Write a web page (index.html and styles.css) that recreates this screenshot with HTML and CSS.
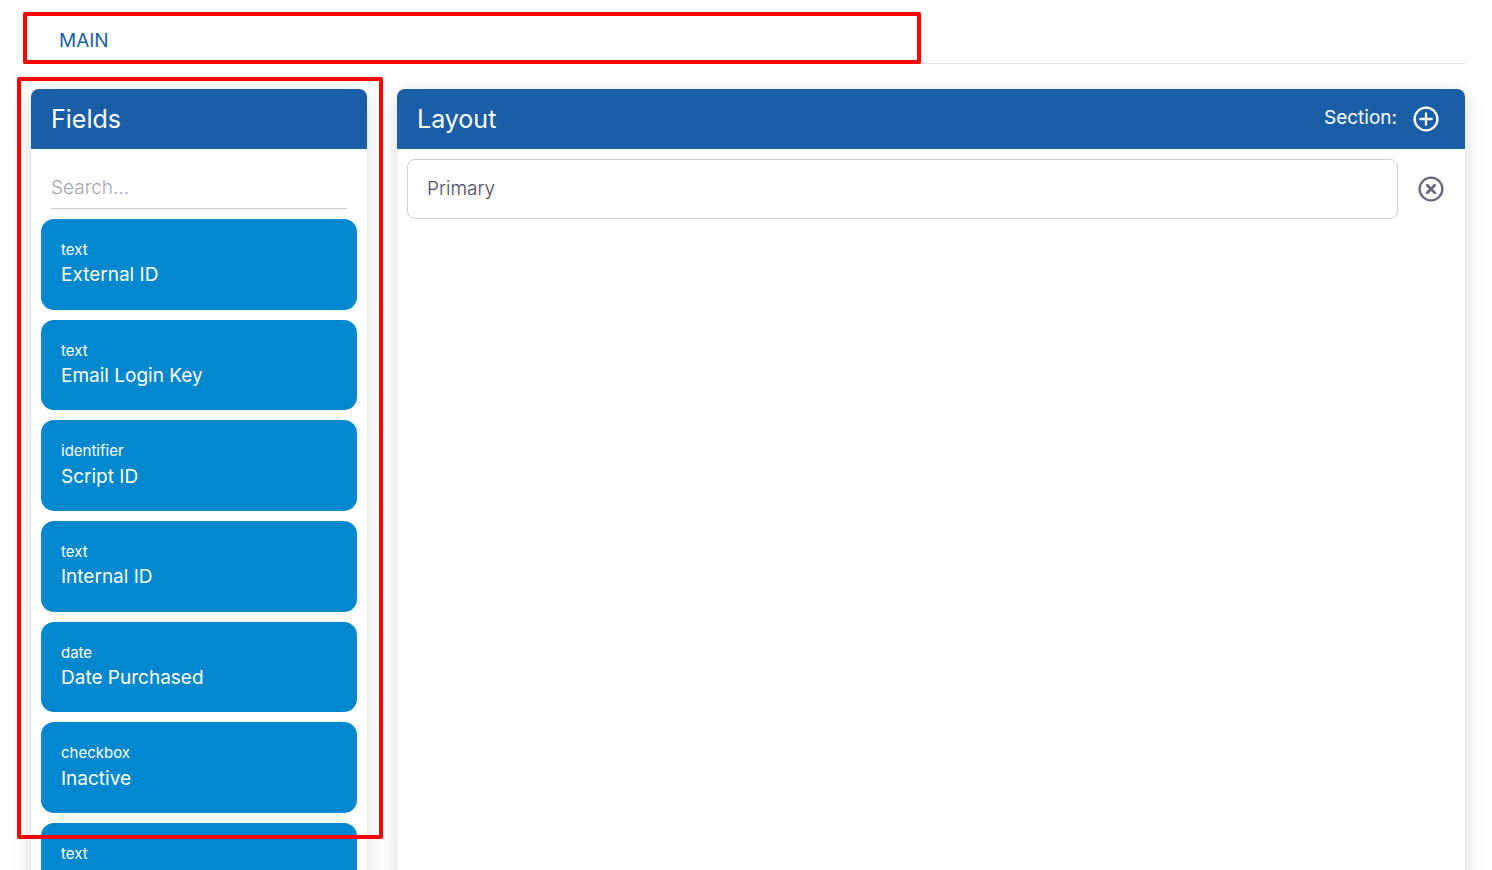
FILE: index.html
```
<!DOCTYPE html>
<html lang="en">
<head>
<meta charset="utf-8">
<meta name="viewport" content="width=device-width, initial-scale=1">
<title>Form layout</title>
<link rel="stylesheet" href="styles.css">
</head>
<body>
<div class="page">
  <nav class="tabs">
    <a class="tab" href="#main">MAIN</a>
  </nav>
  <main class="columns" id="main">
    <section class="panel">
      <header class="panel-header">
        <h2 class="panel-title">Fields</h2>
      </header>
      <div class="panel-body">
        <div class="search">
          <input class="search-input" type="text" placeholder="Search..." aria-label="Search fields">
        </div>
        <ul class="fields">
          <li class="field"><span class="field-type">text</span><span class="field-name">External ID</span></li>
          <li class="field"><span class="field-type">text</span><span class="field-name">Email Login Key</span></li>
          <li class="field"><span class="field-type">identifier</span><span class="field-name">Script ID</span></li>
          <li class="field"><span class="field-type">text</span><span class="field-name">Internal ID</span></li>
          <li class="field"><span class="field-type">date</span><span class="field-name">Date Purchased</span></li>
          <li class="field"><span class="field-type">checkbox</span><span class="field-name">Inactive</span></li>
          <li class="field"><span class="field-type">text</span><span class="field-name"></span></li>
        </ul>
      </div>
    </section>
    <section class="panel">
      <header class="panel-header">
        <h2 class="panel-title">Layout</h2>
        <div class="section-add">
          <span class="section-label" id="section-label">Section:</span>
          <button class="icon-button" type="button" aria-labelledby="section-label">
            <svg class="icon" viewBox="0 0 26 26" fill="none" stroke="currentColor" stroke-width="2.3" stroke-linecap="round">
              <circle cx="13" cy="13" r="11.4"/>
              <path d="M13 7.3v11.4M7.3 13h11.4"/>
            </svg>
          </button>
        </div>
      </header>
      <div class="panel-body section-row">
        <input class="section-input" type="text" value="Primary" aria-label="Section name">
        <button class="icon-button remove" type="button" aria-label="Remove section">
          <svg class="icon" viewBox="0 0 26 26" fill="none" stroke="currentColor" stroke-width="2.3" stroke-linecap="round">
            <circle cx="13" cy="13" r="11.4"/>
            <path stroke-width="2.8" d="M9.3 9.3l7.4 7.4M16.7 9.3l-7.4 7.4"/>
          </svg>
        </button>
      </div>
    </section>
  </main>
  <div class="callout callout-tabs"></div>
  <div class="callout callout-fields"></div>
</div>
</body>
</html>
```
FILE: styles.css
```
* {
  box-sizing: border-box;
}

body {
  margin: 0;
  background: #fff;
  color: #4f4b5e;
  font-family: Inter, "Liberation Sans", sans-serif;
  font-size: 19px;
}

.page {
  position: relative;
  display: flex;
  flex-direction: column;
  height: 100vh;
  padding: 16px 27px 0 31px;
  overflow: hidden;
}

.tabs {
  display: flex;
  border-bottom: 1px solid #e2e2e4;
}

.tab {
  padding: 11px 28px 8px;
  color: #195ea7;
  line-height: 28px;
  text-decoration: none;
}

.columns {
  flex: 1;
  display: grid;
  grid-template-columns: 336px 1fr;
  gap: 30px;
  min-height: 0;
  padding-top: 25px;
}

.panel {
  background: #fff;
  border-radius: 8px;
  box-shadow: 0 5px 20px rgba(0, 0, 0, 0.15);
}

.panel-header {
  display: flex;
  align-items: center;
  justify-content: space-between;
  height: 60px;
  padding: 0 26px 0 20px;
  border-radius: 8px 8px 0 0;
  background: #195ea7;
  color: #fff;
}

.panel-title {
  margin: 0;
  font-size: 25px;
  font-weight: 400;
}

.panel-body {
  padding: 10px;
}

.search {
  padding: 0 10px 10px;
}

.search-input {
  display: block;
  width: 100%;
  height: 50px;
  padding: 8px 0 0;
  border: 0;
  border-bottom: 1px solid #c9c8cf;
  outline: 0;
  background: none;
  color: inherit;
  font: inherit;
  font-weight: 300;
}

.search-input::placeholder {
  color: #a5a4ae;
}

.fields {
  display: flex;
  flex-direction: column;
  gap: 10px;
  margin: 0;
  padding: 0;
  list-style: none;
}

.field {
  display: flex;
  flex-direction: column;
  padding: 20px;
  border-radius: 13px;
  background: #0088ce;
  color: #fff;
}

.field-type {
  font-size: 15px;
  line-height: 1.48;
}

.field-name {
  line-height: 1.5;
}

.section-add {
  display: flex;
  align-items: center;
  gap: 16px;
}

.section-label {
  padding-bottom: 4px;
}

.icon-button {
  display: flex;
  flex: none;
  padding: 0;
  border: 0;
  background: none;
  color: inherit;
  cursor: pointer;
}

.icon {
  width: 26px;
  height: 26px;
}

.section-row {
  display: flex;
  align-items: center;
  gap: 20px;
  padding-right: 21px;
}

.section-input {
  flex: 1;
  min-width: 0;
  height: 60px;
  padding: 0 19px 2px;
  border: 1px solid #cfcfd3;
  border-radius: 8px;
  outline: 0;
  background: #fff;
  color: inherit;
  font: inherit;
  font-weight: 300;
}

.remove {
  color: #6a677a;
}

/* Highlight frames drawn over the page */
.callout {
  position: absolute;
  border: 4px solid #f00;
  border-radius: 2px;
  pointer-events: none;
}

.callout-tabs {
  top: 12px;
  left: 23px;
  width: 898px;
  height: 52px;
}

.callout-fields {
  top: 77px;
  left: 17px;
  width: 366px;
  height: 762px;
}
```
